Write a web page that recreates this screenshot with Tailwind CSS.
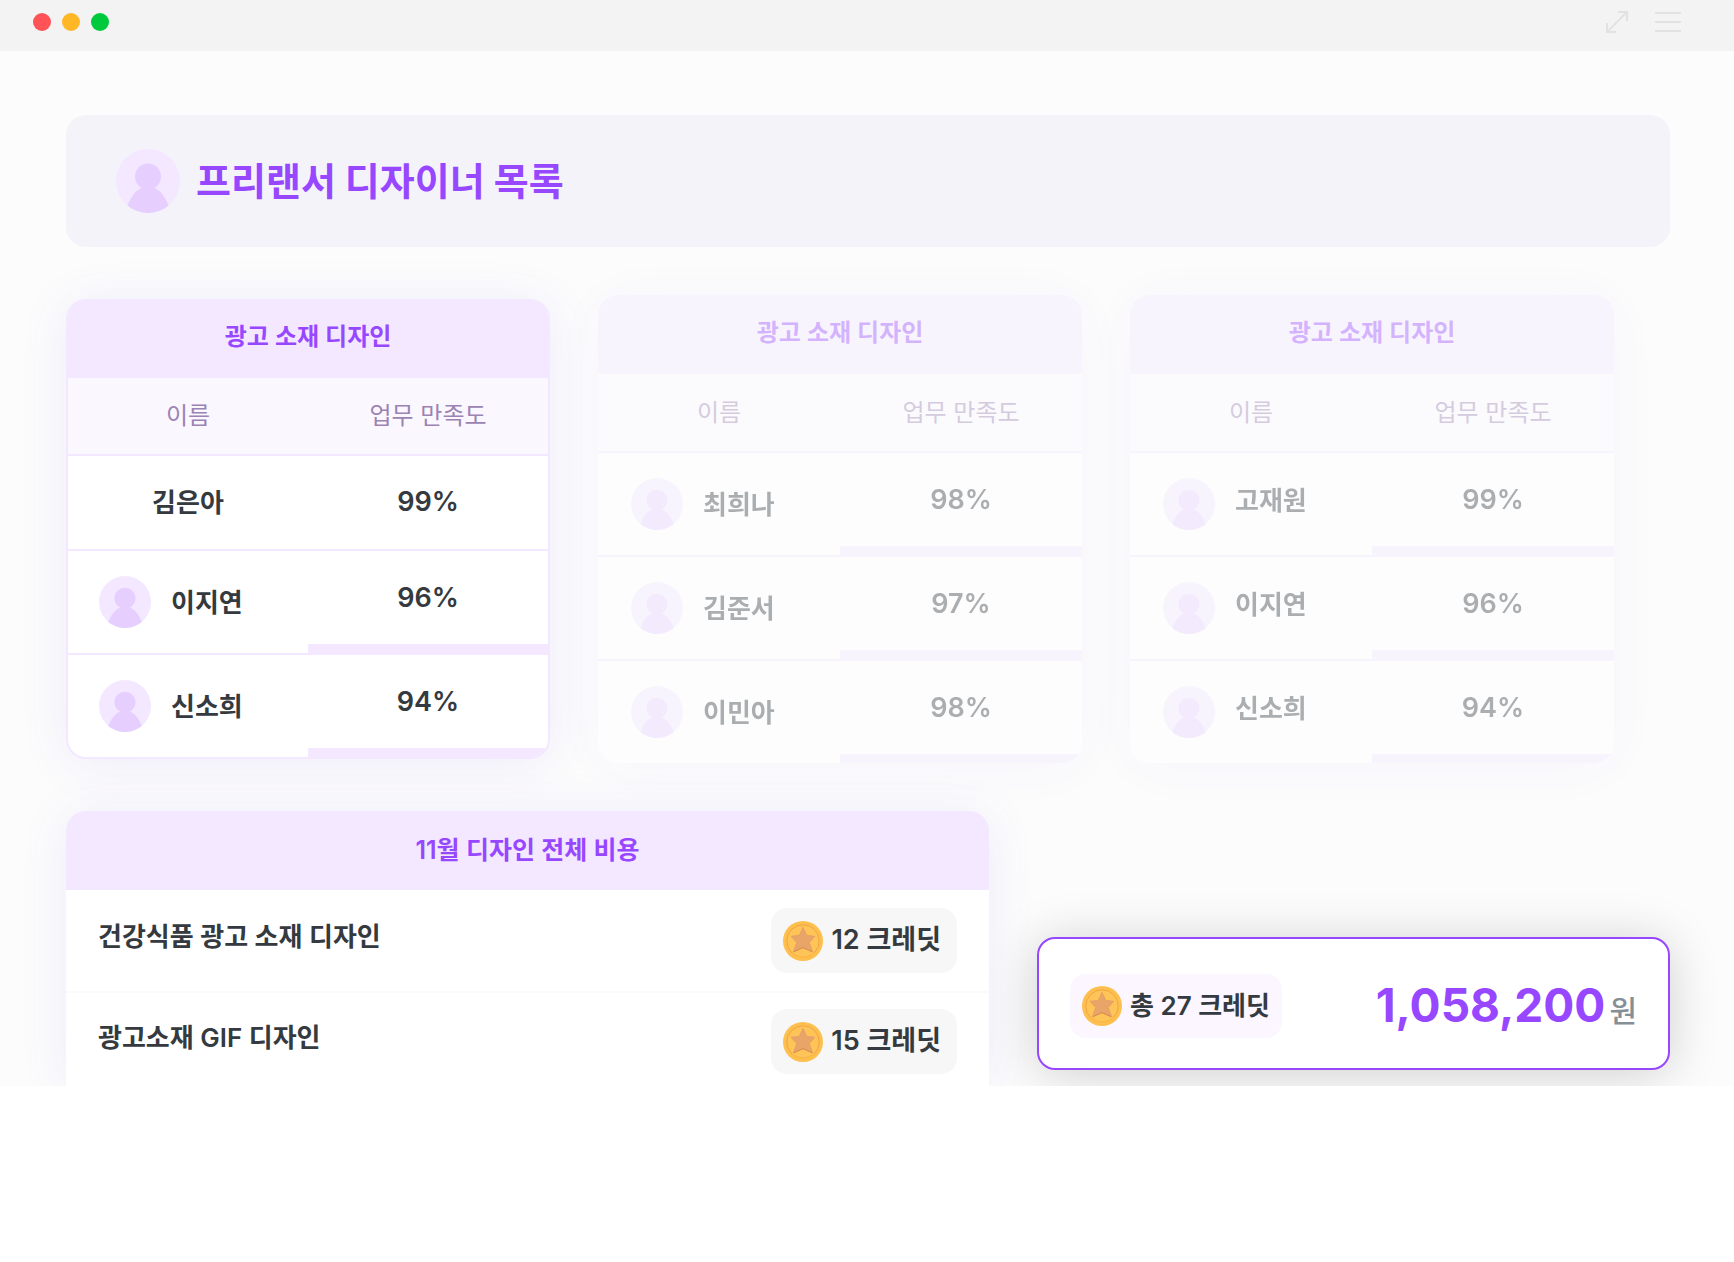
<!DOCTYPE html>
<html lang="ko">
<head>
    <meta charset="UTF-8">
    <meta name="viewport" content="width=device-width, initial-scale=1.0">
    <title>프리랜서 디자이너 목록</title>
    <script src="https://cdn.jsdelivr.net/npm/@tailwindcss/browser@4"></script>
</head>

<body class="bg-white font-['Inter','Noto_Sans_CJK_KR',sans-serif] text-[#343a40]">
    <!-- shared icons -->
    <svg class="hidden" aria-hidden="true">
        <symbol id="avatar" viewBox="0 0 64 64">
            <circle cx="32" cy="32" r="32" fill="#f3e8ff" />
            <g fill="#e6cfff">
                <circle cx="32" cy="27.500" r="13" />
                <path d="M27 38.500C19 41 14.500 49 11.500 56.600A32 32 0 0 0 52.500 56.600C49.500 49 45 41 37 38.500Z" />
            </g>
        </symbol>
        <symbol id="coin" viewBox="0 0 40 40">
            <circle cx="20" cy="20" r="20" fill="#fdc04e" />
            <circle cx="20" cy="20" r="16.200" fill="#ffc457" stroke="#f0a544" stroke-width="1" />
            <path d="M9 31.900A16.200 16.200 0 0 0 31 31.900" fill="none" stroke="#fdb94a" stroke-width="1.500" />
            <path d="M20 6.500L23.800 14.500L31.800 15.300L26.200 21.600L29.400 30.500L20 26.400L10.600 30.500L13.800 21.600L8.200 15.300L16.200 14.500Z" fill="#e9a468" stroke="#e5a066" stroke-width="1" stroke-linejoin="round" />
            <path d="M10.600 30.800L20 26.700L29.400 30.800" fill="none" stroke="#d98b50" stroke-width="1" stroke-linejoin="round" />
        </symbol>
    </svg>

    <header class="flex h-[51px] items-center justify-between bg-[#f3f3f3] pr-[53px] pb-[7px] pl-[33px]">
        <div class="flex gap-[11px]">
            <span class="size-[18px] rounded-full bg-[#ff5357]"></span>
            <span class="size-[18px] rounded-full bg-[#ffb726]"></span>
            <span class="size-[18px] rounded-full bg-[#00c93c]"></span>
        </div>
        <div class="flex gap-[26px] text-[#e2e2e2]">
            <button type="button" aria-label="확대">
                <svg class="size-6" viewBox="0 0 24 24" fill="none" stroke="currentColor" stroke-width="2"><path d="M2 22L22 2M13 2H22V11M2 13V22H11" /></svg>
            </button>
            <button type="button" aria-label="메뉴">
                <svg class="h-6 w-[26px]" viewBox="0 0 26 24" stroke="currentColor" stroke-width="2"><path d="M0 3H26M0 12H26M0 21H26" /></svg>
            </button>
        </div>
    </header>

    <main class="overflow-hidden bg-[#fcfcfc] px-16 pt-16 pl-[66px]">
        <div class="flex items-center gap-4 rounded-[20px] bg-[#f4f3f9] px-[50px] py-[34px]">
            <svg class="size-16"><use href="#avatar" /></svg>
            <h1 class="text-[38px] leading-[64px] font-bold text-[#9747ff]">프리랜서 디자이너 목록</h1>
        </div>

        <div class="mt-12 mr-14 grid grid-cols-3 items-start gap-12">
            <section class="mt-1 overflow-hidden rounded-[20px] border-2 border-t-0 border-[#f3e8ff] bg-white shadow-[0_4px_50px_rgba(100,70,230,0.09)]">
                <table class="w-full table-fixed border-collapse text-center text-[26px] font-semibold">
                    <caption class="h-[79px] bg-[#f3e8ff] text-2xl leading-[76px] text-[#9747ff]">광고 소재 디자인</caption>
                    <thead class="bg-[#faf7ff] text-2xl text-[#9b83b3]">
                        <tr class="h-[77px] border-b-2 border-[#f3e8ff]">
                            <th class="font-normal">이름</th>
                            <th class="font-normal">업무 만족도</th>
                        </tr>
                    </thead>
                    <tbody>
                        <tr class="h-[95px] border-b-2 border-[#f3e8ff]">
                            <td>김은아</td>
                            <td class="text-[27px]">99%</td>
                        </tr>
                        <tr class="h-[104px] border-b-2 border-[#f3e8ff]">
                            <td><div class="flex items-center gap-5 pl-[31px]"><svg class="size-[52px]"><use href="#avatar" /></svg>이지연</div></td>
                            <td class="bg-[#f3e8ff] p-0 align-top text-[27px]"><div class="bg-white leading-[93px]">96%</div></td>
                        </tr>
                        <tr class="h-[103px]">
                            <td><div class="flex items-center gap-5 pl-[31px]"><svg class="size-[52px]"><use href="#avatar" /></svg>신소희</div></td>
                            <td class="bg-[#f3e8ff] p-0 align-top text-[27px]"><div class="bg-white leading-[93px]">94%</div></td>
                        </tr>
                    </tbody>
                </table>
            </section>

            <section class="overflow-hidden rounded-[20px] bg-white opacity-40 shadow-[0_4px_60px_rgba(100,70,230,0.09)]">
                <table class="w-full table-fixed border-collapse text-center text-[26px] font-semibold">
                    <caption class="h-[79px] bg-[#f3e8ff] text-2xl leading-[76px] text-[#9747ff]">광고 소재 디자인</caption>
                    <thead class="bg-[#faf7ff] text-2xl text-[#9b83b3]">
                        <tr class="h-[78px] border-b-2 border-[#f3e8ff]">
                            <th class="font-normal">이름</th>
                            <th class="font-normal">업무 만족도</th>
                        </tr>
                    </thead>
                    <tbody>
                        <tr class="h-[104px] border-b-2 border-[#f3e8ff]">
                            <td><div class="flex items-center gap-5 pl-[33px]"><svg class="size-[52px]"><use href="#avatar" /></svg>최희나</div></td>
                            <td class="bg-[#f3e8ff] p-0 align-top text-[27px]"><div class="bg-white leading-[93px]">98%</div></td>
                        </tr>
                        <tr class="h-[104px] border-b-2 border-[#f3e8ff]">
                            <td><div class="flex items-center gap-5 pl-[33px]"><svg class="size-[52px]"><use href="#avatar" /></svg>김준서</div></td>
                            <td class="bg-[#f3e8ff] p-0 align-top text-[27px]"><div class="bg-white leading-[93px]">97%</div></td>
                        </tr>
                        <tr class="h-[103px]">
                            <td><div class="flex items-center gap-5 pl-[33px]"><svg class="size-[52px]"><use href="#avatar" /></svg>이민아</div></td>
                            <td class="bg-[#f3e8ff] p-0 align-top text-[27px]"><div class="bg-white leading-[93px]">98%</div></td>
                        </tr>
                    </tbody>
                </table>
            </section>

            <section class="overflow-hidden rounded-[20px] bg-white opacity-40 shadow-[0_4px_60px_rgba(100,70,230,0.09)]">
                <table class="w-full table-fixed border-collapse text-center text-[26px] font-semibold">
                    <caption class="h-[79px] bg-[#f3e8ff] text-2xl leading-[76px] text-[#9747ff]">광고 소재 디자인</caption>
                    <thead class="bg-[#faf7ff] text-2xl text-[#9b83b3]">
                        <tr class="h-[78px] border-b-2 border-[#f3e8ff]">
                            <th class="font-normal">이름</th>
                            <th class="font-normal">업무 만족도</th>
                        </tr>
                    </thead>
                    <tbody>
                        <tr class="h-[104px] border-b-2 border-[#f3e8ff]">
                            <td><div class="flex items-center gap-5 pl-[33px]"><svg class="size-[52px]"><use href="#avatar" /></svg><span class="pb-2">고재원</span></div></td>
                            <td class="bg-[#f3e8ff] p-0 align-top text-[27px]"><div class="bg-white leading-[93px]">99%</div></td>
                        </tr>
                        <tr class="h-[104px] border-b-2 border-[#f3e8ff]">
                            <td><div class="flex items-center gap-5 pl-[33px]"><svg class="size-[52px]"><use href="#avatar" /></svg><span class="pb-2">이지연</span></div></td>
                            <td class="bg-[#f3e8ff] p-0 align-top text-[27px]"><div class="bg-white leading-[93px]">96%</div></td>
                        </tr>
                        <tr class="h-[103px]">
                            <td><div class="flex items-center gap-5 pl-[33px]"><svg class="size-[52px]"><use href="#avatar" /></svg><span class="pb-2">신소희</span></div></td>
                            <td class="bg-[#f3e8ff] p-0 align-top text-[27px]"><div class="bg-white leading-[93px]">94%</div></td>
                        </tr>
                    </tbody>
                </table>
            </section>
        </div>

        <div class="mt-12 flex items-end gap-12">
            <section class="flex-1 overflow-hidden rounded-t-[20px] bg-white shadow-[0_4px_50px_rgba(100,70,230,0.09)]">
                <table class="w-full border-collapse text-[26px] font-semibold">
                    <caption class="h-[79px] bg-[#f3e8ff] text-[25px] leading-[78px] text-[#9747ff]">11월 디자인 전체 비용</caption>
                    <tbody>
                        <tr class="h-[102px] border-b-2 border-[#fafafa]">
                            <td class="pb-2 pl-8">건강식품 광고 소재 디자인</td>
                            <td class="pr-8">
                                <div class="ml-auto flex h-[65px] w-fit items-center gap-2 rounded-2xl bg-[#f7f7f7] pr-4 pl-3 text-[27px]"><svg class="size-10"><use href="#coin" /></svg>12 크레딧</div>
                            </td>
                        </tr>
                        <tr class="h-[94px]">
                            <td class="pb-1 pl-8">광고소재 GIF 디자인</td>
                            <td class="pt-1 pr-8">
                                <div class="ml-auto flex h-[65px] w-fit items-center gap-2 rounded-2xl bg-[#f7f7f7] pr-4 pl-3 text-[27px]"><svg class="size-10"><use href="#coin" /></svg>15 크레딧</div>
                            </td>
                        </tr>
                    </tbody>
                </table>
            </section>

            <section class="mb-4 flex h-[133px] w-[633px] items-center justify-between rounded-[18px] border-2 border-[#9747ff] bg-white px-[31px] pt-1 shadow-[0_4px_50px_rgba(0,0,0,0.18)]">
                <div class="flex h-16 items-center gap-2 rounded-2xl bg-[#fbf6ff] px-3 text-[26px] font-semibold"><svg class="size-10"><use href="#coin" /></svg>총 27 크레딧</div>
                <p class="flex items-baseline gap-1 text-[46px] font-bold text-[#9747ff]">1,058,200<span class="text-[30px] font-medium text-[#868e96]">원</span></p>
            </section>
        </div>
    </main>
</body>
</html>
